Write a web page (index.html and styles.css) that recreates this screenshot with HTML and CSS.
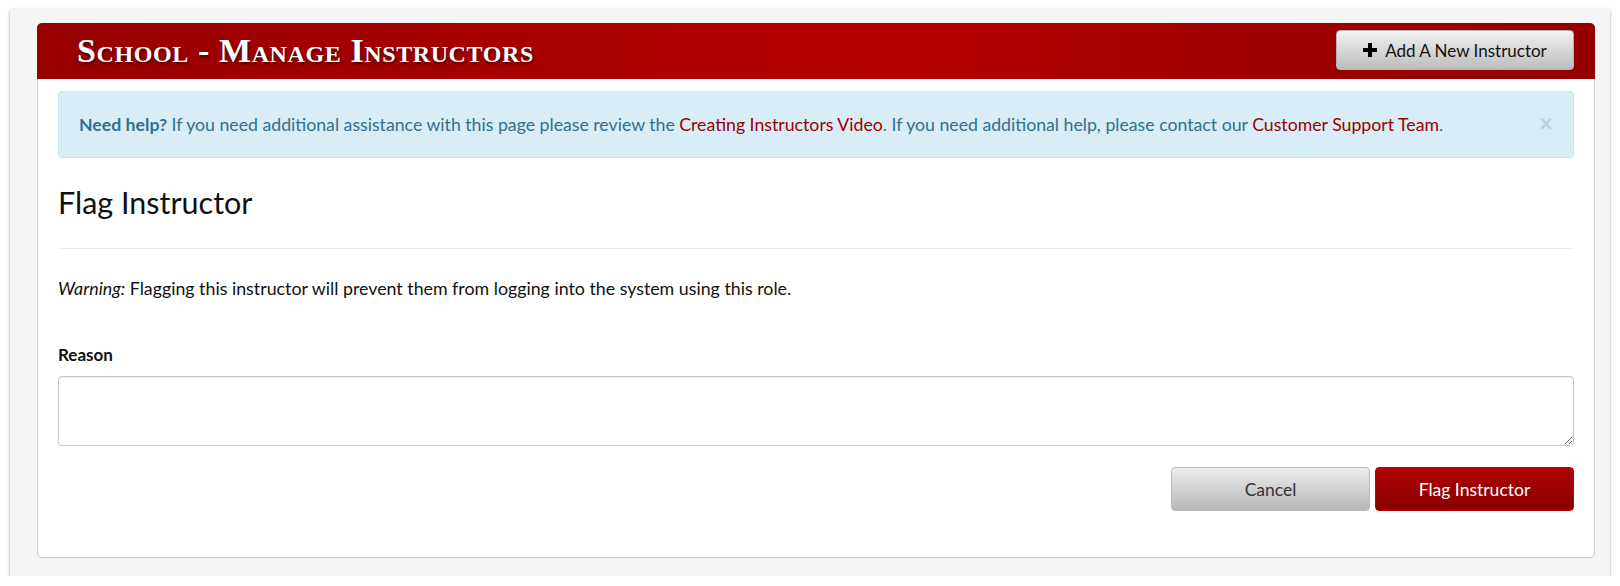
FILE: index.html
```html
<!DOCTYPE html>
<html>
<head>
<meta charset="utf-8">
<link rel="stylesheet" href="styles.css">
</head>
<body>
<div class="frame">
  <div class="panel">
    <div class="panel-head">
      <h1 class="title">School - Manage Instructors</h1>
      <button class="btn btn-add" type="button">
        <svg class="plus" width="14" height="14" viewBox="0 0 14 14"><rect x="5" y="0" width="4" height="14"/><rect x="0" y="5" width="14" height="4"/></svg>
        <span>Add A New Instructor</span>
      </button>
    </div>
    <div class="panel-body">
      <div class="alert">
        <p><strong>Need help?</strong> If you need additional assistance with this page please review the <a href="#">Creating Instructors Video</a>. If you need additional help, please contact our <a href="#">Customer Support Team</a>.</p>
        <span class="close">&times;</span>
      </div>
      <h2 class="page-title">Flag Instructor</h2>
      <hr class="rule">
      <p class="warning"><em>Warning:</em> Flagging this instructor will prevent them from logging into the system using this role.</p>
      <label class="label" for="reason">Reason</label>
      <textarea id="reason" class="reason"></textarea>
      <div class="actions">
        <button class="btn btn-cancel" type="button">Cancel</button>
        <button class="btn btn-flag" type="button">Flag Instructor</button>
      </div>
    </div>
  </div>
</div>
</body>
</html>
```

FILE: styles.css
```css
html, body {
  margin: 0;
  padding: 0;
  background: #ffffff;
}
body {
  font-family: "Lato", "Liberation Sans", sans-serif;
  color: #111;
}
.frame {
  margin: 9px 10px 0 10px;
  width: 1600px;
  height: 567px;
  box-sizing: border-box;
  padding: 14px 15px 18px 27px;
  background: #f4f4f4;
  box-shadow: 0 1px 3px rgba(0,0,0,0.35);
}
.panel {
  height: 100%;
  box-sizing: border-box;
  background: #fff;
  border: 1px solid #c8c8c8;
  border-radius: 5px;
  display: flex;
  flex-direction: column;
}
.panel-head {
  height: 56px;
  margin: -1px -1px 0 -1px;
  border-radius: 5px 5px 0 0;
  background: linear-gradient(to right, #980000 0%, #a70000 30%, #b70000 55%, #a00000 78%, #960000 100%);
  display: flex;
  align-items: center;
  justify-content: space-between;
  padding: 0 21px 0 40px;
}
.title {
  margin: 0;
  font-family: "Liberation Serif", "DejaVu Serif", serif;
  font-variant: small-caps;
  font-weight: bold;
  font-size: 34px;
  letter-spacing: 0.6px;
  color: #fff;
  text-shadow: 1px 2px 3px rgba(40,0,0,0.75);
  line-height: 1;
  margin-top: -1px;
}
.btn {
  font-family: "Lato", "Liberation Sans", sans-serif;
  border-radius: 4px;
  cursor: pointer;
  display: inline-flex;
  align-items: center;
  justify-content: center;
}
.btn-add {
  width: 238px;
  height: 40px;
  margin-top: -2px;
  border: 1px solid #b5b5b5;
  background: linear-gradient(to bottom, #f2f2f2, #bdbdbd);
  color: #111;
  font-size: 17px;
  gap: 8px;
  padding: 0;
}
.plus {
  fill: #000;
  flex: none;
}
.panel-body {
  padding: 12px 20px 0 20px;
  display: flex;
  flex-direction: column;
}
.alert {
  position: relative;
  height: 67px;
  box-sizing: border-box;
  background: #d9edf7;
  border: 1px solid #bce8f1;
  border-radius: 4px;
  color: #31708f;
  padding: 0 60px 0 20px;
  display: flex;
  align-items: center;
  font-size: 17.7px;
}
.alert p {
  margin: 0;
}
.alert a {
  color: #9b0000;
  text-decoration: none;
}
.close {
  position: absolute;
  right: 20px;
  top: 19px;
  font-size: 24px;
  font-weight: bold;
  line-height: 1;
  color: #b5d3e2;
}
.page-title {
  margin: 26px 0 0 0;
  font-weight: normal;
  font-size: 30.5px;
  line-height: 36px;
  color: #111;
}
.rule {
  margin: 28px 0 0 0;
  border: 0;
  border-top: 1px solid #ececec;
}
.warning {
  margin: 28px 0 0 0;
  font-size: 17.8px;
  line-height: 23px;
}
.label {
  margin-top: 43px;
  font-weight: bold;
  font-size: 17px;
  line-height: 23px;
}
.reason {
  margin-top: 10px;
  height: 70px;
  box-sizing: border-box;
  border: 1px solid #c8c8c8;
  border-radius: 4px;
  resize: vertical;
  font-family: inherit;
  font-size: 16px;
  box-shadow: inset 0 1px 1px rgba(0,0,0,0.06);
}
.actions {
  margin-top: 21px;
  display: flex;
  justify-content: flex-end;
  gap: 5px;
}
.btn-cancel, .btn-flag {
  width: 199px;
  height: 44px;
  font-size: 17.5px;
  padding: 0;
}
.btn-cancel {
  border: 1px solid #bdbdbd;
  background: linear-gradient(to bottom, #ececec, #b7b7b7);
  color: #333;
}
.btn-flag {
  border: 1px solid #c40000;
  background: linear-gradient(to bottom, #b00000, #870000);
  color: #fff;
}
```
